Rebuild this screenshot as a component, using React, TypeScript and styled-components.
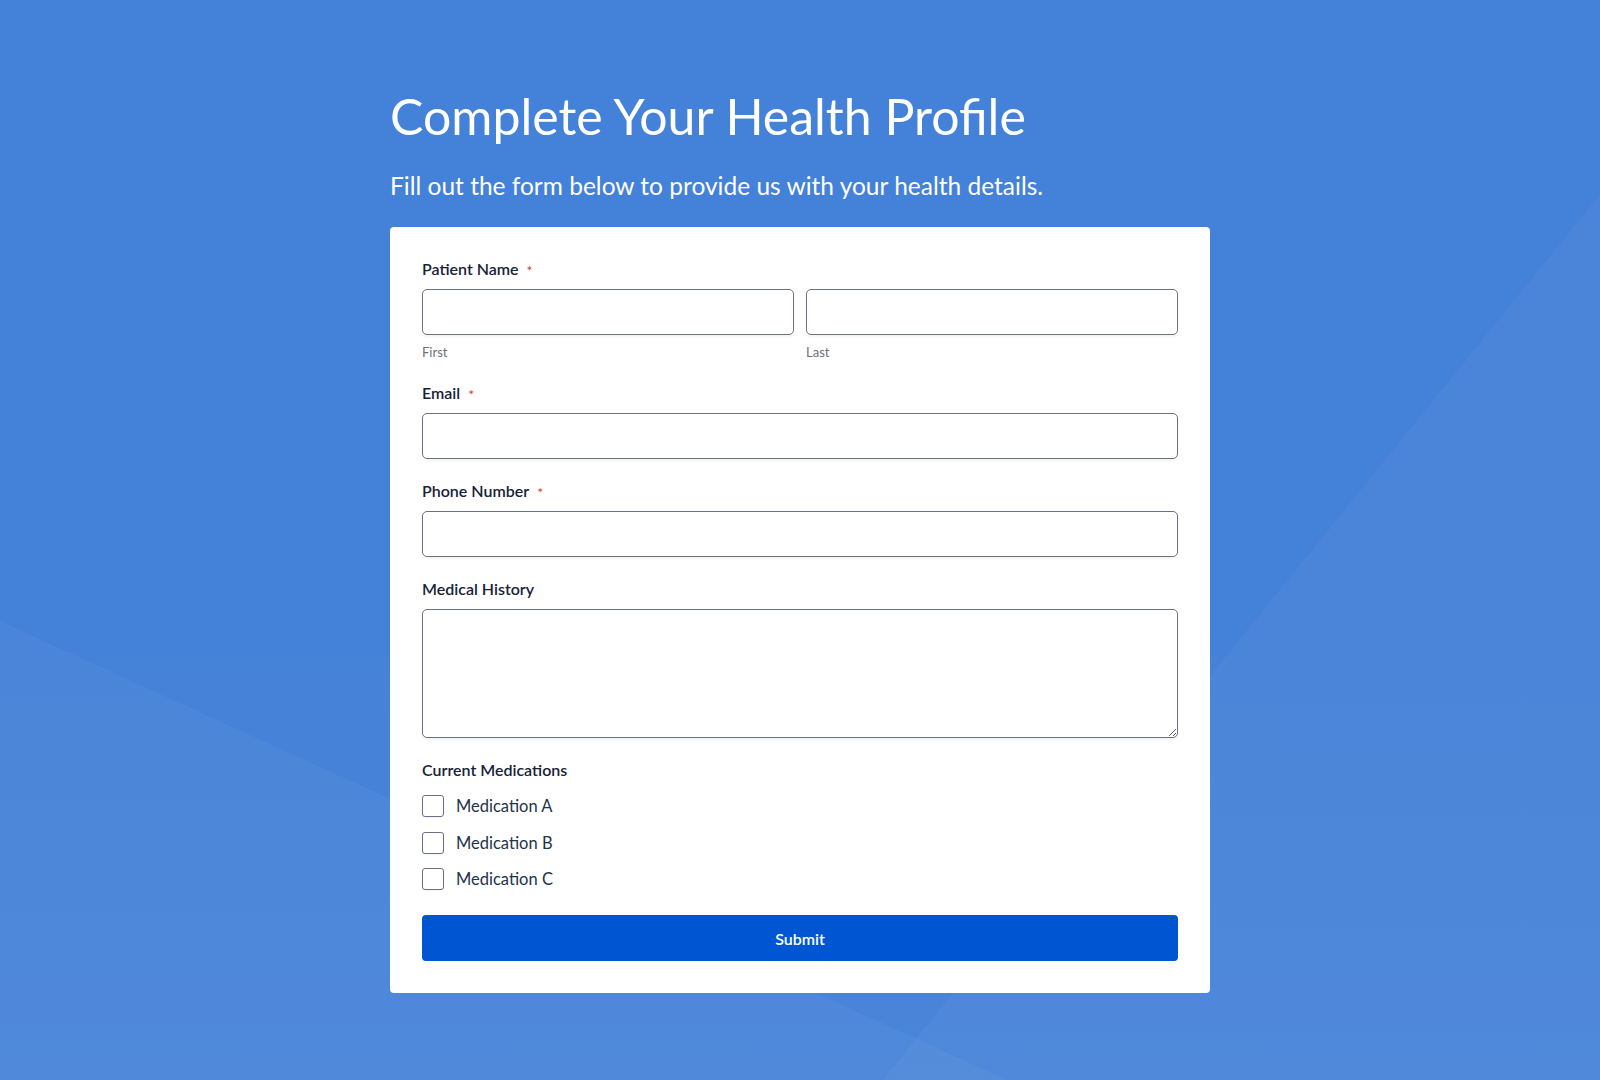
import React from 'react';
import styled, { createGlobalStyle } from 'styled-components';

const GlobalStyle = createGlobalStyle`
  * {
    box-sizing: border-box;
  }

  html, body {
    margin: 0;
    min-height: 100%;
  }

  body {
    font-family: Lato, "Noto Sans", "Liberation Sans", sans-serif;
    background-color: #4481d8;
    background-image:
      linear-gradient(204.5deg, transparent 74.6%, rgba(255, 255, 255, 0.035) 74.6%),
      linear-gradient(129deg, transparent 71%, rgba(255, 255, 255, 0.03) 71%),
      linear-gradient(180deg, transparent 55%, rgba(255, 255, 255, 0.03) 100%);
    min-height: 1080px;
  }
`;

const Page = styled.div`
  width: 820px;
  margin: 0 auto;
  padding: 86px 0 88px;
`;

const Title = styled.h1`
  margin: 0;
  font-family: Lato, "Noto Sans", sans-serif;
  font-size: 50px;
  font-weight: 400;
  line-height: 1.2;
  color: #ffffff;
`;

const Subtitle = styled.p`
  margin: 25px 0 27px;
  font-size: 24.5px;
  line-height: 1.2;
  color: #ffffff;
`;

const Card = styled.form`
  background: #ffffff;
  border-radius: 4px;
  padding: 32px;
  display: flex;
  flex-direction: column;
  gap: 22px;
`;

const Field = styled.div`
  display: flex;
  flex-direction: column;
`;

const Label = styled.label`
  display: flex;
  align-items: center;
  gap: 8px;
  height: 20px;
  font-size: 16px;
  line-height: 20px;
  font-weight: 600;
  color: #172236;
  margin-bottom: 10px;
`;

const Required = styled.span`
  align-self: flex-start;
  margin-top: 5px;
  color: #d4421f;
  font-size: 14px;
  line-height: 14px;
  font-weight: 400;
`;

const NameRow = styled.div`
  display: grid;
  grid-template-columns: 1fr 1fr;
  gap: 12px;
`;

const NamePart = styled.div`
  display: flex;
  flex-direction: column;
`;

const SubLabel = styled.span`
  margin-top: 8px;
  font-size: 13px;
  line-height: 18px;
  color: #6b7280;
`;

const fieldBox = `
  width: 100%;
  border: 1px solid #6b7183;
  border-radius: 5px;
  background: #ffffff;
  box-shadow: 0 2px 3px rgba(17, 24, 39, 0.05);
  font-family: Lato, "Noto Sans", sans-serif;
  font-size: 16px;
  color: #172236;
  outline: none;
`;

const TextInput = styled.input`
  ${fieldBox}
  height: 46px;
  padding: 0 12px;
`;

const TextArea = styled.textarea`
  ${fieldBox}
  display: block;
  height: 129px;
  padding: 10px 12px;
  resize: vertical;
`;

const CheckList = styled.div`
  display: flex;
  flex-direction: column;
  gap: 12.5px;
  margin-top: 4px;
`;

const CheckRow = styled.label`
  display: flex;
  align-items: center;
  gap: 12px;
  height: 24px;
  font-size: 16.5px;
  color: #243347;
  cursor: pointer;
`;

const CheckBox = styled.input.attrs({ type: 'checkbox' })`
  appearance: none;
  margin: 0;
  width: 22px;
  height: 22px;
  border: 1px solid #6b7183;
  border-radius: 3px;
  background: #ffffff;
  box-shadow: 0 1px 2px rgba(17, 24, 39, 0.05);
  flex-shrink: 0;

  &:checked {
    background: #0056d2;
    border-color: #0056d2;
  }
`;

const SubmitButton = styled.button`
  margin-top: 2px;
  height: 46px;
  width: 100%;
  border: none;
  border-radius: 4px;
  background: #0056d2;
  color: #ffffff;
  font-family: Lato, "Noto Sans", sans-serif;
  font-size: 16px;
  font-weight: 600;
  cursor: pointer;
`;

const medications = ['Medication A', 'Medication B', 'Medication C'];

const App: React.FC = () => {
  return (
    <>
      <GlobalStyle />
      <Page>
        <Title>Complete Your Health Profile</Title>
        <Subtitle>Fill out the form below to provide us with your health details.</Subtitle>

        <Card onSubmit={e => e.preventDefault()}>
          <Field>
            <Label>
              Patient Name <Required>*</Required>
            </Label>
            <NameRow>
              <NamePart>
                <TextInput type="text" aria-label="First name" />
                <SubLabel>First</SubLabel>
              </NamePart>
              <NamePart>
                <TextInput type="text" aria-label="Last name" />
                <SubLabel>Last</SubLabel>
              </NamePart>
            </NameRow>
          </Field>

          <Field>
            <Label htmlFor="email">
              Email <Required>*</Required>
            </Label>
            <TextInput id="email" type="email" />
          </Field>

          <Field>
            <Label htmlFor="phone">
              Phone Number <Required>*</Required>
            </Label>
            <TextInput id="phone" type="tel" />
          </Field>

          <Field>
            <Label htmlFor="history">Medical History</Label>
            <TextArea id="history" />
          </Field>

          <Field>
            <Label as="div">Current Medications</Label>
            <CheckList>
              {medications.map(med => (
                <CheckRow key={med}>
                  <CheckBox />
                  {med}
                </CheckRow>
              ))}
            </CheckList>
          </Field>

          <SubmitButton type="submit">Submit</SubmitButton>
        </Card>
      </Page>
    </>
  );
};

export default App;
